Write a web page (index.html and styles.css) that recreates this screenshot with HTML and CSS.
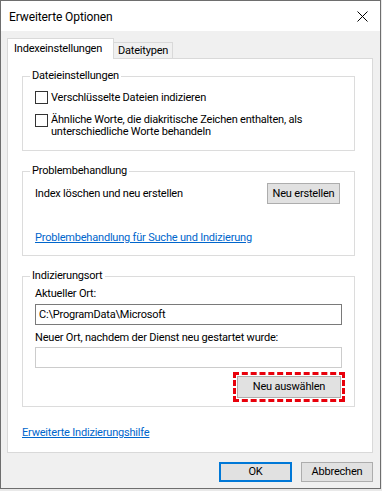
FILE: index.html
```html
<!DOCTYPE html>
<html>
<head>
<meta charset="utf-8"/>
<link rel="stylesheet" href="styles.css">
</head>
<body>
<div class="window">
  <div class="titlebar">
    <span class="title">Erweiterte Optionen</span>
    <svg class="close" width="11" height="11" viewBox="0 0 11 11">
      <path d="M0.5 0.5 L10.5 10.5 M10.5 0.5 L0.5 10.5" stroke="#000" stroke-width="1" fill="none"/>
    </svg>
  </div>

  <div class="client">
    <div class="tabs">
      <div class="tab active">Indexeinstellungen</div>
      <div class="tab">Dateitypen</div>
    </div>

    <div class="panel">
      <fieldset class="group files">
        <legend>Dateieinstellungen</legend>
        <label class="check">
          <span class="box"></span>
          <span>Verschlüsselte Dateien indizieren</span>
        </label>
        <label class="check wrap">
          <span class="box"></span>
          <span>Ähnliche Worte, die diakritische Zeichen enthalten, als<br>unterschiedliche Worte behandeln</span>
        </label>
      </fieldset>

      <fieldset class="group trouble">
        <legend>Problembehandlung</legend>
        <div class="row">
          <span>Index löschen und neu erstellen</span>
          <button class="btn rebuild">Neu erstellen</button>
        </div>
        <a class="link trouble-link" href="#">Problembehandlung für Suche und Indizierung</a>
      </fieldset>

      <fieldset class="group location">
        <legend>Indizierungsort</legend>
        <div class="label">Aktueller Ort:</div>
        <div class="field">C:\ProgramData\Microsoft</div>
        <div class="label second">Neuer Ort, nachdem der Dienst neu gestartet wurde:</div>
        <div class="field empty"></div>
        <div class="pick-row">
          <button class="btn pick">Neu auswählen</button>
        </div>
      </fieldset>

      <a class="link help-link" href="#">Erweiterte Indizierungshilfe</a>
    </div>

    <div class="actions">
      <button class="btn ok">OK</button>
      <button class="btn cancel">Abbrechen</button>
    </div>
  </div>
</div>
</body>
</html>
```

FILE: styles.css
```css
html {
  background: #e9e9e9;
}

body {
  margin: 0;
  font-family: Roboto, "Liberation Sans", sans-serif;
  font-size: 11px;
  letter-spacing: -0.2px;
  color: #000;
}

.window {
  box-sizing: border-box;
  width: 381px;
  height: 489px;
  border: 1px solid #6e6e6e;
  background: #f0f0f0;
  display: flex;
  flex-direction: column;
}

.titlebar {
  height: 30px;
  background: #fff;
  display: flex;
  align-items: center;
  justify-content: space-between;
  padding: 0 9px 0 8px;
}

.title {
  font-size: 12px;
  letter-spacing: -0.1px;
  line-height: 14px;
  margin-top: 1px;
}

.close {
  margin-right: 3px;
  margin-top: 1px;
}

.client {
  flex: 1;
  padding: 7px 7px 0 6px;
}

.tabs {
  display: flex;
  align-items: flex-end;
  height: 20px;
}

.tab {
  box-sizing: border-box;
  height: 16px;
  padding: 0 4px;
  line-height: 15px;
  border: 1px solid #d9d9d9;
  border-bottom: none;
  background: #f0f0f0;
  margin-left: -1px;
}

.tab.active {
  position: relative;
  z-index: 1;
  width: 107px;
  height: 21px;
  margin-bottom: -1px;
  margin-left: 0;
  padding: 0 6px;
  line-height: 20px;
  background: #fff;
}

.panel {
  box-sizing: border-box;
  height: 395px;
  border: 1px solid #d9d9d9;
  background: #fff;
  padding-top: 10px;
}

.group {
  margin: 0 17px 0 14px;
  padding: 0 0 0 12px;
  border: 1px solid #dcdcdc;
  min-width: 0;
}

.group legend {
  padding: 0 2px;
  margin-left: -5px;
  line-height: 14px;
}

.files {
  padding-top: 8px;
  padding-bottom: 12px;
}

.check {
  display: flex;
  align-items: flex-start;
  line-height: 13px;
}

.check.wrap {
  margin-top: 10px;
  line-height: 12px;
}

.box {
  box-sizing: border-box;
  flex: none;
  width: 13px;
  height: 13px;
  border: 1px solid #333;
  background: #fff;
  margin-right: 3px;
}

.trouble {
  margin-top: 13px;
  padding-top: 5px;
  padding-bottom: 10px;
  padding-right: 14px;
}

.row {
  display: flex;
  align-items: center;
  justify-content: space-between;
}

.link {
  display: block;
  color: #0066cc;
  text-decoration: underline;
  line-height: 14px;
}

.trouble-link {
  margin-top: 27px;
  width: max-content;
}

.btn {
  box-sizing: border-box;
  font: inherit;
  letter-spacing: inherit;
  color: #000;
  background: #e1e1e1;
  border: 1px solid #adadad;
  padding: 0;
  line-height: 16px;
  white-space: nowrap;
}

.rebuild {
  width: 73px;
  height: 21px;
}

.location {
  margin-top: 13px;
  padding-top: 4px;
  padding-bottom: 8px;
  padding-right: 12px;
}

.label {
  line-height: 14px;
}

.label.second {
  margin-top: 6px;
}

.field {
  box-sizing: border-box;
  height: 21px;
  margin-top: 3px;
  border: 1px solid #7a7a7a;
  padding-left: 3px;
  line-height: 19px;
}

.field.empty {
  margin-top: 2px;
  border-color: #cccccc;
}

.pick-row {
  display: flex;
  justify-content: flex-end;
  margin-top: 8px;
  padding-right: 1px;
}

.pick {
  width: 104px;
  height: 22px;
  outline: 3px dashed #e8000b;
  outline-offset: 1px;
}

.help-link {
  margin: 19px 0 0 14px;
  width: max-content;
}

.actions {
  display: flex;
  justify-content: flex-end;
  gap: 9px;
  margin-top: 9px;
}

.ok {
  width: 73px;
  height: 20px;
  border: 2px solid #0078d7;
}

.cancel {
  width: 72px;
  height: 20px;
}
```
